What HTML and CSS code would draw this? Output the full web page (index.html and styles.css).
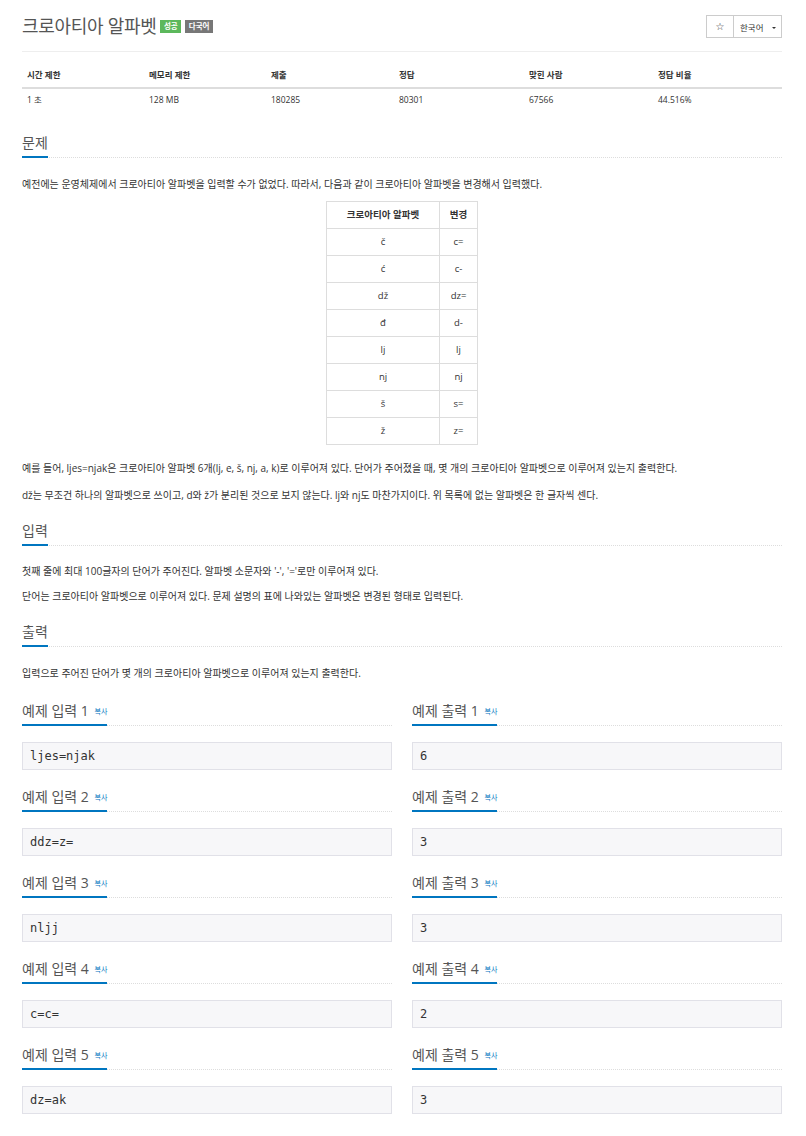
FILE: index.html
```html
<!DOCTYPE html>
<html lang="ko">
<head>
  <meta charset="UTF-8" />
  <title>크로아티아 알파벳</title>
  <link rel="stylesheet" href="styles.css">
</head>
<body>
  <div class="container">
    <div class="page-header">
      <h1 class="problem-title">
        크로아티아 알파벳
        <span class="label label-success">성공</span>
        <span class="label label-default">다국어</span>
      </h1>
      <div class="btn-group">
        <button class="btn">☆</button>
        <button class="btn">한국어 <span class="caret"></span></button>
      </div>
    </div>

    <table class="info-table">
      <thead>
        <tr>
          <th class="w1">시간 제한</th>
          <th class="w1">메모리 제한</th>
          <th class="w2">제출</th>
          <th class="w3">정답</th>
          <th class="w4">맞힌 사람</th>
          <th>정답 비율</th>
        </tr>
      </thead>
      <tbody>
        <tr>
          <td>1 초</td>
          <td>128 MB</td>
          <td>180285</td>
          <td>80301</td>
          <td>67566</td>
          <td>44.516%</td>
        </tr>
      </tbody>
    </table>

    <section class="problem-section">
      <h2 class="headline"><span>문제</span></h2>
      <p>예전에는 운영체제에서 크로아티아 알파벳을 입력할 수가 없었다. 따라서, 다음과 같이 크로아티아 알파벳을 변경해서 입력했다.</p>
      <table class="alpha-table">
        <thead>
          <tr><th class="col-a">크로아티아 알파벳</th><th class="col-b">변경</th></tr>
        </thead>
        <tbody>
          <tr><td>č</td><td>c=</td></tr>
          <tr><td>ć</td><td>c-</td></tr>
          <tr><td>dž</td><td>dz=</td></tr>
          <tr><td>đ</td><td>d-</td></tr>
          <tr><td>lj</td><td>lj</td></tr>
          <tr><td>nj</td><td>nj</td></tr>
          <tr><td>š</td><td>s=</td></tr>
          <tr><td>ž</td><td>z=</td></tr>
        </tbody>
      </table>
      <p>예를 들어, ljes=njak은 크로아티아 알파벳 6개(lj, e, š, nj, a, k)로 이루어져 있다. 단어가 주어졌을 때, 몇 개의 크로아티아 알파벳으로 이루어져 있는지 출력한다.</p>
      <p>dž는 무조건 하나의 알파벳으로 쓰이고, d와 ž가 분리된 것으로 보지 않는다. lj와 nj도 마찬가지이다. 위 목록에 없는 알파벳은 한 글자씩 센다.</p>
    </section>

    <section class="problem-section">
      <h2 class="headline"><span>입력</span></h2>
      <p>첫째 줄에 최대 100글자의 단어가 주어진다. 알파벳 소문자와 '-', '='로만 이루어져 있다.</p>
      <p>단어는 크로아티아 알파벳으로 이루어져 있다. 문제 설명의 표에 나와있는 알파벳은 변경된 형태로 입력된다.</p>
    </section>

    <section class="problem-section">
      <h2 class="headline"><span>출력</span></h2>
      <p>입력으로 주어진 단어가 몇 개의 크로아티아 알파벳으로 이루어져 있는지 출력한다.</p>
    </section>

    <div class="samples">
      <div class="sample">
        <h2 class="headline"><span>예제 입력 1 <a class="copy">복사</a></span></h2>
        <pre>ljes=njak</pre>
      </div>
      <div class="sample">
        <h2 class="headline"><span>예제 출력 1 <a class="copy">복사</a></span></h2>
        <pre>6</pre>
      </div>
      <div class="sample">
        <h2 class="headline"><span>예제 입력 2 <a class="copy">복사</a></span></h2>
        <pre>ddz=z=</pre>
      </div>
      <div class="sample">
        <h2 class="headline"><span>예제 출력 2 <a class="copy">복사</a></span></h2>
        <pre>3</pre>
      </div>
      <div class="sample">
        <h2 class="headline"><span>예제 입력 3 <a class="copy">복사</a></span></h2>
        <pre>nljj</pre>
      </div>
      <div class="sample">
        <h2 class="headline"><span>예제 출력 3 <a class="copy">복사</a></span></h2>
        <pre>3</pre>
      </div>
      <div class="sample">
        <h2 class="headline"><span>예제 입력 4 <a class="copy">복사</a></span></h2>
        <pre>c=c=</pre>
      </div>
      <div class="sample">
        <h2 class="headline"><span>예제 출력 4 <a class="copy">복사</a></span></h2>
        <pre>2</pre>
      </div>
      <div class="sample">
        <h2 class="headline"><span>예제 입력 5 <a class="copy">복사</a></span></h2>
        <pre>dz=ak</pre>
      </div>
      <div class="sample">
        <h2 class="headline"><span>예제 출력 5 <a class="copy">복사</a></span></h2>
        <pre>3</pre>
      </div>
    </div>

    <section class="problem-section">
      <h2 class="headline plain"><span>출처</span></h2>
    </section>
  </div>
</body>
</html>
```

FILE: styles.css
```css
:root {
  --text: #333333;
  --heading: #555555;
  --blue: #0076c0;
  --line: #dddddd;
}

* {
  box-sizing: border-box;
}

body {
  margin: 0;
  font-family: 'Open Sans', 'Noto Sans CJK KR', sans-serif;
  font-variant-ligatures: none;
  color: var(--text);
  background: #ffffff;
}

.container {
  width: 760px;
  margin: 0 22px;
}

/* header */

.page-header {
  display: flex;
  justify-content: space-between;
  align-items: center;
  padding-top: 15px;
  padding-bottom: 13px;
  border-bottom: 1px solid #eeeeee;
}

.problem-title {
  margin: 0;
  font-size: 18px;
  font-weight: 400;
  letter-spacing: -0.3px;
  line-height: 23px;
  color: var(--heading);
  display: flex;
  align-items: center;
}

.label {
  display: inline-block;
  font-size: 7.5px;
  font-weight: 700;
  letter-spacing: 0;
  line-height: 13px;
  padding: 0 3.5px;
  color: #ffffff;
  margin-left: 4px;
}

.label-success {
  background: #5cb85c;
}

.label-default {
  background: #777777;
}

.btn-group {
  display: flex;
}

.btn {
  font-family: 'Open Sans', 'Noto Sans CJK KR', sans-serif;
  height: 23px;
  padding: 0 6px;
  font-size: 8.5px;
  white-space: nowrap;
  color: var(--text);
  background: #ffffff;
  border: 1px solid #cccccc;
}

.btn:first-child {
  width: 28px;
  font-family: 'DejaVu Sans', sans-serif;
  font-size: 10px;
}

.btn + .btn {
  margin-left: -1px;
  width: 49px;
  text-align: left;
}

.caret {
  display: inline-block;
  width: 0;
  height: 0;
  margin-left: 6px;
  vertical-align: middle;
  border-top: 2px solid #333333;
  border-left: 2px solid transparent;
  border-right: 2px solid transparent;
}

/* info table */

.info-table {
  width: 100%;
  margin-top: 11px;
  border-collapse: collapse;
  font-size: 8.5px;
  table-layout: fixed;
}

.info-table .w1 { width: 122px; }
.info-table .w2 { width: 128px; }
.info-table .w3 { width: 130px; }
.info-table .w4 { width: 129px; }

.info-table th {
  text-align: left;
  font-weight: 700;
  line-height: 12px;
  padding: 6px 5px;
  border-bottom: 2px solid var(--line);
}

.info-table td {
  line-height: 12px;
  padding: 5px 5px;
}

/* sections */

.problem-section {
  margin-top: 22px;
}

.problem-section + .problem-section {
  margin-top: 17px;
}

.headline {
  margin: 0 0 17.5px;
  font-size: 14px;
  font-weight: 400;
  line-height: 20px;
  color: var(--heading);
  border-bottom: 1px dotted var(--line);
}

.headline span {
  display: inline-block;
  padding-bottom: 3px;
  margin-bottom: -1px;
  border-bottom: 2px solid var(--blue);
}

.problem-section p {
  margin: 0 0 10px;
  font-size: 10px;
  line-height: 17px;
}

.problem-section > p:first-of-type {
  margin-bottom: 8px;
}

.alpha-table {
  margin: 0 auto 15px;
  border-collapse: collapse;
  font-size: 9.5px;
}

.alpha-table th,
.alpha-table td {
  border: 1px solid var(--line);
  text-align: center;
  line-height: 12px;
  padding: 7px 0;
}

.alpha-table .col-a {
  width: 113px;
}

.alpha-table .col-b {
  width: 38px;
}

/* samples */

.samples {
  display: grid;
  grid-template-columns: 1fr 1fr;
  column-gap: 20px;
  margin-top: 19.5px;
}

.sample .headline {
  margin-bottom: 16px;
}

.copy {
  font-size: 7px;
  line-height: 10px;
  color: var(--blue);
  margin-left: 2px;
  vertical-align: 2px;
}

pre {
  margin: 0 0 17px;
  padding: 6px 7px;
  font-family: 'DejaVu Sans Mono', monospace;
  font-size: 12px;
  line-height: 14px;
  color: var(--text);
  background: #f7f7f9;
  border: 1px solid #e1e1e8;
}

.plain {
  border-bottom: none;
}

.plain span {
  border-bottom: none;
}
```
